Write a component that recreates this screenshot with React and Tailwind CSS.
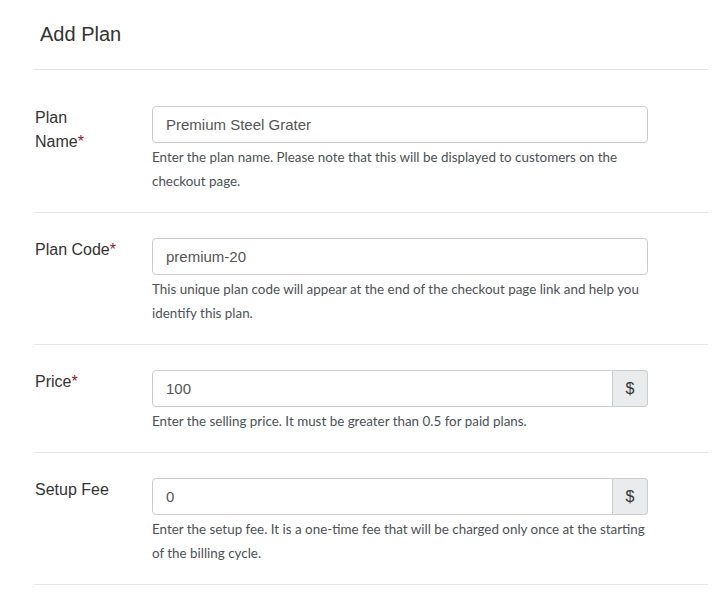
import React from 'react';

const fields = [
  {
    label: 'Plan Name',
    required: true,
    value: 'Premium Steel Grater',
    help: 'Enter the plan name. Please note that this will be displayed to customers on the checkout page.',
  },
  {
    label: 'Plan Code',
    required: true,
    value: 'premium-20',
    help: 'This unique plan code will appear at the end of the checkout page link and help you identify this plan.',
  },
  {
    label: 'Price',
    required: true,
    value: '100',
    addon: '$',
    help: 'Enter the selling price. It must be greater than 0.5 for paid plans.',
  },
  {
    label: 'Setup Fee',
    required: false,
    value: '0',
    addon: '$',
    help: 'Enter the setup fee. It is a one-time fee that will be charged only once at the starting of the billing cycle.',
  },
];

const FieldRow = ({ field, first }) => (
  <div className={`flex border-b border-[#e6e6e6] pl-[1px] pb-[19px] ${first ? 'pt-[36px]' : 'pt-[25px]'}`}>
    {/* Label */}
    <div className="w-[117px] shrink-0 pr-[32px]">
      <div className="text-[16px] leading-[24px] text-[#333] font-['Liberation_Sans',Arial,sans-serif]">
        {field.label}
        {field.required && <span className="text-[#8b1a2b]">*</span>}
      </div>
    </div>

    {/* Input + help */}
    <div className="w-[496px]">
      <div className="flex h-[37px]">
        <div
          className={`flex flex-1 items-center border border-[#cccccc] bg-white pl-[13px] pt-[1px] text-[15px] text-[#555] font-['Liberation_Sans',Arial,sans-serif] ${
            field.addon ? 'rounded-l-[4px]' : 'rounded-[4px]'
          }`}
        >
          {field.value}
        </div>
        {field.addon && (
          <div className="flex w-[35px] items-center justify-center rounded-r-[4px] border border-l-0 border-[#cccccc] bg-[#eaebec] text-[16px] text-[#333] font-['Liberation_Sans',Arial,sans-serif]">
            {field.addon}
          </div>
        )}
      </div>
      <p className="mt-[2px] text-[13.4px] leading-[24px] text-[#4c5157] font-['Lato',sans-serif]">
        {field.help}
      </p>
    </div>
  </div>
);

export default function App() {
  return (
    <div className="w-[726px] min-h-[596px] bg-white pl-[34px] pr-[18px]">
      {/* Header */}
      <div className="border-b border-[#e6e6e6] pl-[6px] pt-[20px] pb-[21px]">
        <h1 className="text-[20px] leading-[28px] text-[#333] font-['Liberation_Sans',Arial,sans-serif]">Add Plan</h1>
      </div>

      {fields.map((f, i) => (
        <FieldRow key={f.label} field={f} first={i === 0} />
      ))}
    </div>
  );
}
